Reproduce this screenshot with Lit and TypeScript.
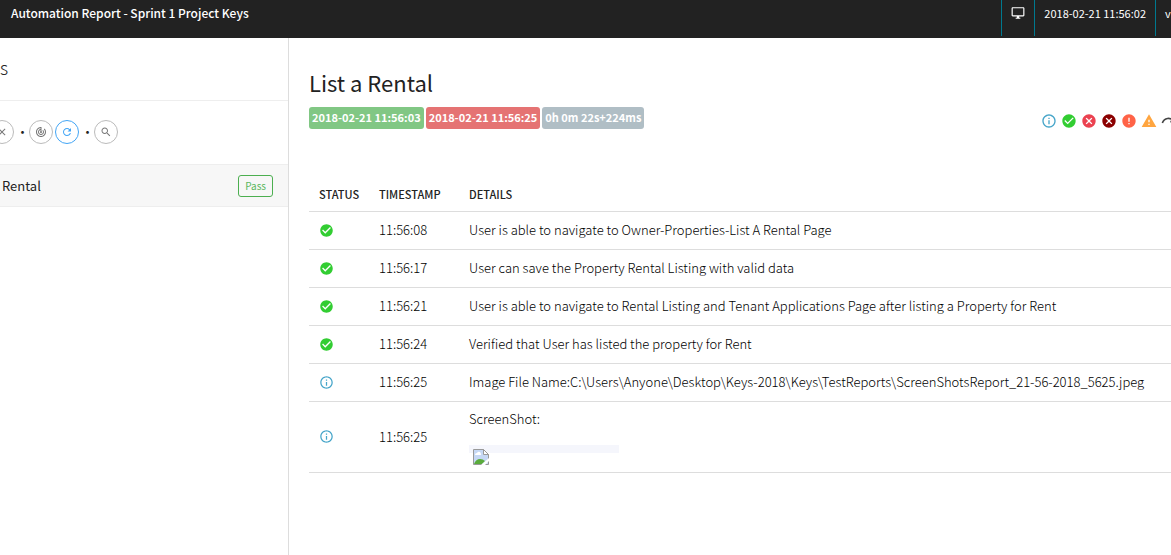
import { LitElement, html, css, svg, nothing } from "lit";
import { customElement, property } from "lit/decorators.js";

const ICONS: Record<string, unknown> = {
  info: svg`<path d="M11 17h2v-6h-2v6zm1-15C6.48 2 2 6.48 2 12s4.48 10 10 10 10-4.48 10-10S17.520 2 12 2zm0 18c-4.410 0-8-3.590-8-8s3.590-8 8-8 8 3.590 8 8-3.590 8-8 8zM11 9h2V7h-2v2z"/>`,
  pass: svg`<path d="M12 2C6.480 2 2 6.480 2 12s4.480 10 10 10 10-4.480 10-10S17.520 2 12 2zm-2 15l-5-5 1.410-1.410L10 14.170l7.590-7.590L19 8l-9 9z"/>`,
  fail: svg`<path d="M12 2C6.470 2 2 6.470 2 12s4.470 10 10 10 10-4.470 10-10S17.530 2 12 2zm5 13.590L15.590 17 12 13.410 8.410 17 7 15.590 10.590 12 7 8.410 8.410 7 12 10.590 15.590 7 17 8.410 13.410 12 17 15.590z"/>`,
  error: svg`<path d="M12 2C6.480 2 2 6.480 2 12s4.480 10 10 10 10-4.480 10-10S17.520 2 12 2zm1 15h-2v-2h2v2zm0-4h-2V7h2v6z"/>`,
  warning: svg`<path d="M1 21h22L12 2 1 21zm12-3h-2v-2h2v2zm0-4h-2v-4h2v4z"/>`,
  skip: svg`<path d="M2 15 C5 7 14 6 19 12 M20 7v6h-6" fill="none" stroke="currentColor" stroke-width="2.400"/>`,
  monitor: svg`<path d="M21 2H3c-1.100 0-2 .9-2 2v12c0 1.100.9 2 2 2h7v2H8v2h8v-2h-2v-2h7c1.100 0 2-.9 2-2V4c0-1.100-.9-2-2-2zm0 14H3V4h18v12z"/>`,
  clear: svg`<path d="M19 6.410L17.590 5 12 10.590 6.410 5 5 6.410 10.590 12 5 17.590 6.410 19 12 13.410 17.590 19 19 17.590 13.410 12z"/>`,
  track: svg`<path d="M19.070 4.930l-1.410 1.410C19.100 7.790 20 9.790 20 12c0 4.420-3.580 8-8 8s-8-3.580-8-8c0-4.080 3.050-7.440 7-7.930v2.020C8.160 6.570 6 9.030 6 12c0 3.310 2.690 6 6 6s6-2.690 6-6c0-1.660-.67-3.160-1.760-4.240l-1.410 1.410C15.550 9.900 16 10.900 16 12c0 2.210-1.790 4-4 4s-4-1.790-4-4c0-1.860 1.280-3.410 3-3.860v2.140c-.6.350-1 .98-1 1.720 0 1.100.9 2 2 2s2-.9 2-2c0-.74-.4-1.380-1-1.720V2h-1C6.480 2 2 6.480 2 12s4.480 10 10 10 10-4.480 10-10c0-2.760-1.120-5.260-2.930-7.070z"/>`,
  refresh: svg`<path d="M17.650 6.350C16.200 4.900 14.210 4 12 4c-4.420 0-7.990 3.580-7.990 8s3.570 8 7.990 8c3.730 0 6.840-2.550 7.730-6h-2.080c-.82 2.330-3.040 4-5.650 4-3.310 0-6-2.690-6-6s2.690-6 6-6c1.660 0 3.140.69 4.220 1.780L13 11h7V4l-2.350 2.350z"/>`,
  search: svg`<path d="M15.500 14h-.79l-.28-.27C15.410 12.590 16 11.110 16 9.500 16 5.910 13.090 3 9.500 3S3 5.910 3 9.500 5.910 16 9.500 16c1.610 0 3.090-.59 4.230-1.570l.27.280v.79l5 4.990L20.490 19l-4.990-5zm-6 0C7.010 14 5 11.990 5 9.500S7.010 5 9.500 5 14 7.010 14 9.500 11.990 14 9.500 14z"/>`,
};

@customElement("app-icon")
class AppIcon extends LitElement {
  @property() name = "";
  @property() label = "";
  static styles = css`
    :host { display: inline-flex; width: 16px; height: 16px; }
    svg { width: 100%; height: 100%; fill: currentColor; }
  `;
  render() {
    return html`<svg viewBox="0 0 24 24" role="img" aria-label=${this.label || nothing}>${ICONS[this.name]}</svg>`;
  }
}

const STEPS = [
  { status: "pass", time: "11:56:08", details: "User is able to navigate to Owner-Properties-List A Rental Page" },
  { status: "pass", time: "11:56:17", details: "User can save the Property Rental Listing with valid data" },
  { status: "pass", time: "11:56:21", details: "User is able to navigate to Rental Listing and Tenant Applications Page after listing a Property for Rent" },
  { status: "pass", time: "11:56:24", details: "Verified that User has listed the property for Rent" },
  { status: "info", time: "11:56:25", details: "Image File Name:C:\\Users\\Anyone\\Desktop\\Keys-2018\\Keys\\TestReports\\ScreenShotsReport_21-56-2018_5625.jpeg" },
  { status: "info", time: "11:56:25", details: "ScreenShot:", shot: true },
];

const FILTERS = ["info", "pass", "fail", "fatal", "error", "warning", "skip"];

@customElement("app-root")
class AppRoot extends LitElement {
  static styles = css`
    :host {
      display: flex; flex-direction: column; min-height: 100vh; overflow: hidden;
      background: #fff; color: #222;
      font: 13px/20px "Noto Sans CJK SC", "Noto Sans", sans-serif;
    }
    * { box-sizing: border-box; }
    .nav { display: flex; justify-content: space-between; height: 38px; background: #222; color: #fff; }
    .brand { padding: 3px 11px; font-size: 12px; font-weight: 500; }
    .meta { display: flex; font-size: 11px; }
    .meta > * { height: 36px; padding: 3px 9px; border-left: 1px solid #00798f; white-space: nowrap; }
    .meta .edge { width: 16px; padding-right: 0; }
    .meta app-icon { width: 14px; height: 14px; margin-top: 3px; }
    .body { display: flex; flex: 1; }
    .side { flex: none; width: 289px; border-right: 1px solid #ddd; }
    .side-title { height: 63px; padding-top: 19px; border-bottom: 1px solid #eee; margin: 0; font-size: 18px; line-height: 20px; font-weight: 300; color: #222; }
    .tools { display: flex; align-items: center; height: 63px; padding-bottom: 1px; margin-left: -10px; gap: 2px; }
    .tool { display: grid; place-items: center; width: 24px; height: 24px; padding: 0; border: 1px solid #bbb; border-radius: 50%; background: #fff; color: #777; }
    .tool app-icon { width: 12px; height: 12px; }
    .tool.active { border-color: #42a5f5; color: #42a5f5; }
    .dot { width: 11px; text-align: center; }
    .test { display: flex; justify-content: space-between; align-items: center; height: 43px; padding: 0 15px 0 2px; background: #f7f7f7; border-top: 1px solid #eee; border-bottom: 1px solid #eee; }
    .badge { padding: 0 6px; border: 1px solid #4caf50; border-radius: 3px; color: #5cb860; font-size: 10px; line-height: 20px; }
    .main { flex: 1; min-width: 0; padding: 30px 0 0 20px; }
    h1 { margin: 0; font-size: 22px; line-height: 28px; font-weight: 400; }
    .info { display: flex; justify-content: space-between; margin-top: 11px; }
    .pills { display: flex; gap: 2px; }
    .pill { height: 22px; padding: 0 3px; border-radius: 3px; color: #fff; font-size: 11px; line-height: 20px; font-weight: 700; }
    .start { background: #81c784; }
    .end { background: #e57373; }
    .took { background: #b0bec5; }
    .filters { display: flex; gap: 4px; margin: 6px -6px 0 0; }
    .filter { display: flex; padding: 0; border: 0; background: none; }
    .info-c { color: #46a5c9; }
    .pass-c { color: #32cd32; }
    .fail-c { color: #eb4250; }
    .fatal-c { color: #8b0000; }
    .error-c { color: #ff6347; }
    .warning-c { color: #ffa53f; }
    .skip-c { color: #444; }
    table { width: 100%; margin-top: 50px; border-collapse: collapse; table-layout: fixed; }
    th { height: 32px; padding: 0 10px 2px; font-size: 11px; font-weight: 500; text-align: left; }
    td { height: 38px; padding: 0 10px; white-space: nowrap; font-weight: 300; }
    .text { color: #000; }
    tr { border-bottom: 1px solid #ddd; }
    .c-status { width: 60px; }
    .c-time { width: 90px; }
    td app-icon { display: flex; width: 15px; height: 15px; }
    .shot-cell { padding: 7px 10px 4px; }
    .shot { display: flex; margin-top: 16px; width: 150px; height: 23px; padding: 4px; background: linear-gradient(#f5f6fc 8px, transparent 8px); }
    .shot svg { width: 16px; height: 16px; }
  `;

  render() {
    return html`
      <header class="nav">
        <div class="brand">Automation Report - Sprint 1 Project Keys</div>
        <div class="meta">
          <div><app-icon name="monitor"></app-icon></div>
          <div>2018-02-21 11:56:02</div>
          <div class="edge">v</div>
        </div>
      </header>
      <div class="body">
        <aside class="side">
          <h2 class="side-title">s</h2>
          <div class="tools">
            <button class="tool" aria-label="Clear filters"><app-icon name="clear"></app-icon></button>
            <span class="dot">·</span>
            <button class="tool" aria-label="Toggle dashboard"><app-icon name="track"></app-icon></button>
            <button class="tool active" aria-label="Refresh charts"><app-icon name="refresh"></app-icon></button>
            <span class="dot">·</span>
            <button class="tool" aria-label="Search"><app-icon name="search"></app-icon></button>
          </div>
          <div class="test"><span>Rental</span><span class="badge">Pass</span></div>
        </aside>
        <main class="main">
          <h1>List a Rental</h1>
          <div class="info">
            <div class="pills">
              <span class="pill start">2018-02-21 11:56:03</span>
              <span class="pill end">2018-02-21 11:56:25</span>
              <span class="pill took">0h 0m 22s+224ms</span>
            </div>
            <div class="filters">
              ${FILTERS.map((f) => html`<button class="filter ${f}-c" aria-label=${f}><app-icon name=${f === "fatal" ? "fail" : f}></app-icon></button>`)}
            </div>
          </div>
          <table>
            <thead>
              <tr><th class="c-status">STATUS</th><th class="c-time">TIMESTAMP</th><th>DETAILS</th></tr>
            </thead>
            <tbody>
              ${STEPS.map((s) => html`<tr>
                <td class="${s.status}-c"><app-icon name=${s.status} label=${s.status}></app-icon></td>
                <td class="text">${s.time}</td>
                <td class="text ${s.shot ? "shot-cell" : ""}">${s.details}${s.shot ? this.shot() : nothing}</td>
              </tr>`)}
            </tbody>
          </table>
        </main>
      </div>
    `;
  }

  private shot() {
    return html`<div class="shot"><svg viewBox="0 0 16 16">
      <path d="M.5.5h10l5 5v10H.5z" fill="#c6d8f5"/>
      <path d="M2 6q0-2 2-2 1-2 3-1 1 1 1 3z" fill="#fff"/>
      <path d="M1 15q2-5 6-5 3 0 5 2l-3 3z" fill="#5aab3c"/>
      <path d="M.5.5h10l5 5v10H.5z" fill="none" stroke="#999"/>
      <path d="M10.500.5v5h5z" fill="#fff" stroke="#999"/>
      <path d="M8 16l8-7v3l-4 4z" fill="#fff"/>
    </svg></div>`;
  }
}
